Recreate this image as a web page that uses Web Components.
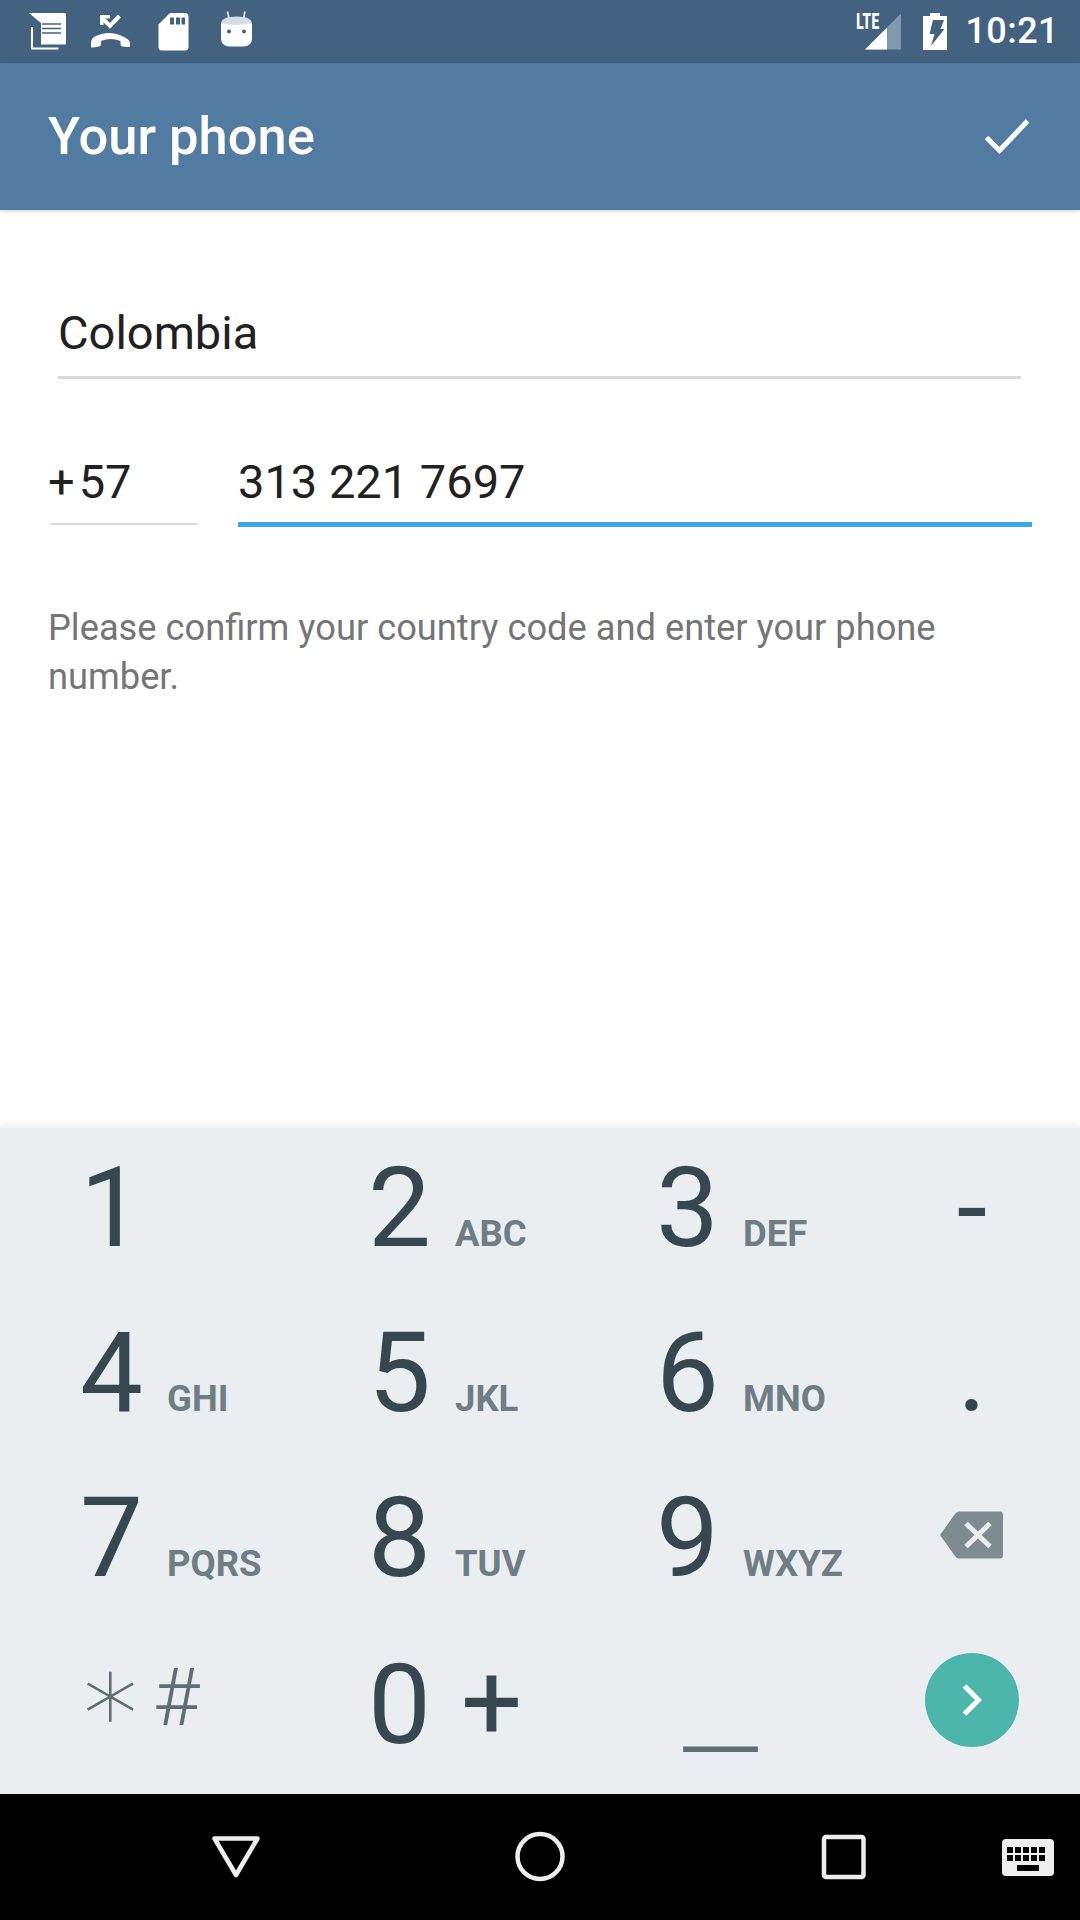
<!DOCTYPE html>
<html><head><meta charset="utf-8"><style>
html,body{margin:0;padding:0;background:#fff}
body{width:1080px;height:1920px;overflow:hidden;font-family:Roboto,"Liberation Sans",sans-serif}
phone-app{display:flex}
</style></head><body>
<phone-app></phone-app>
<script>
function def(name, html, render){
  customElements.define(name, class extends HTMLElement{
    constructor(){super();this.attachShadow({mode:'open'});}
    connectedCallback(){this.shadowRoot.innerHTML = render ? render(this) : html;}
  });
}
def('status-bar',`<style>
:host{display:flex;height:63px;background:#436280;align-items:center;padding:0 21px 0 29px;box-sizing:border-box;color:#fff}
.l{display:flex;gap:0;align-items:flex-start;height:63px}
svg{display:block;flex:none}
.sp{flex:1}
.lte{font:700 22px/1 "Roboto Condensed","Liberation Sans Narrow",Roboto,sans-serif;transform:scaleX(.75);transform-origin:left top;width:24px;letter-spacing:0;margin-top:-20px}
.t{font:500 36px/1 Roboto,sans-serif;letter-spacing:.45px;margin-left:18px;margin-top:-2px}
</style>
<div class="l">
<svg width="230" height="63" viewBox="29 0 230 63">
 <path d="M29 13H64.500Q66 13 66 14.500V43Q66 44.500 64.500 44.500H41V23Z" fill="#fff"/>
 <path d="M42 24H61M42 28.500H61M42 33H61" stroke="#436280" stroke-width="1.500" fill="none"/>
 <path d="M32 27V48.500H58.500" stroke="#fff" stroke-width="2" fill="none"/>
 <path d="M119.500 16L110 26L102 18" stroke="#fff" stroke-width="4" fill="none"/>
 <path d="M100 15H110V18.500H103.500V25H100Z" fill="#fff"/>
 <path d="M91 47V42Q91 39 94 37Q109 29 124 37Q130 40 130 43V46Q130 47 128 47L122 46.500Q120.500 46 120.500 44V41Q110.500 37 101 41V44Q101 46 99 46.500L93 47.500Q91 47.500 91 47Z" fill="#fff"/>
 <path d="M170 13H185Q188.500 13 188.500 16.500V47Q188.500 50.500 185 50.500H162Q158.500 50.500 158.500 47V24.500Z" fill="#fff"/>
 <path d="M170 17.500h4v7h-4zM176 17.500h4v7h-4zM181.500 17.500h3.500v7h-3.500z" fill="#436280"/>
 <path d="M229 19L227.500 11.500M243.500 19L245 11.500" stroke="#d4dde4" stroke-width="1.800" fill="none"/>
 <path d="M221 24Q221 16.500 236.500 16.500Q252 16.500 252 24V25H221Z" fill="#d4dde4"/>
 <path d="M221 23Q236.500 27 252 23V38Q252 46.500 243 46.500H230Q221 46.500 221 38Z" fill="#fff"/>
 <circle cx="229" cy="31.500" r="2" fill="#436280"/><circle cx="244" cy="31.500" r="2" fill="#436280"/>
</svg></div>
<div class="sp"></div>
<span class="lte">LTE</span>
<svg width="36" height="37" viewBox="0 0 36 37" style="margin-left:-15px;margin-top:-1px"><path d="M0 36.500L36 .5V36.500Z" fill="#8199ae"/><path d="M0 36.500L22 14.500V36.500Z" fill="#fff"/></svg>
<svg width="24" height="37" viewBox="0 0 24 37" style="margin-left:22px;margin-top:-1px"><path d="M7 0H17V3H24V37H0V3H7Z" fill="#fff"/><path d="M10 7H21L17.500 16H21.500L8 33L11.500 21H6.500Z" fill="#436280"/></svg>
<span class="t"><slot></slot></span>`);
def('app-toolbar',`<style>
:host{display:flex;height:147px;align-items:center;justify-content:space-between;padding:0 50px 0 48px;box-sizing:border-box;color:#fff;position:relative;z-index:1;box-shadow:0 1px 4px rgba(0,0,0,.2);background:#527ba1}
.h{font:500 52.500px/1 Roboto,sans-serif}
svg{display:block}
</style><span class="h"><slot></slot></span>
<svg width="46" height="36" viewBox="0 0 46 36" style="margin-top:-1px"><path d="M2.500 19.500L15.500 32.500L43.500 3" fill="none" stroke="#fff" stroke-width="5"/></svg>`);
def('text-field',`<style>
:host{display:block;box-sizing:border-box;font:400 47px/1 Roboto,sans-serif;color:#212121}
.v{display:block;height:var(--vh,67px);white-space:pre}
.u{height:var(--uh,3px);background:var(--uc,#d9d9d9);margin-left:var(--ul,0)}
</style><span class="v"><slot></slot></span><div class="u"></div>`);
def('phone-form',`<style>
:host{display:flex;flex-direction:column;flex:1;min-height:0;background:#fff;box-sizing:border-box;padding:99px 48px 0}
.c{margin:0 11px 0 10px}
.r{display:flex;margin-top:79px;align-items:flex-start}
.code{width:149px;margin-right:41px}
.ph{flex:1}
.hint{margin:76px 0 0;font:400 36.25px/49px Roboto,sans-serif;color:#757575}
</style>
<text-field class="c">Colombia</text-field>
<div class="r">
<text-field class="code" style="--uh:2px;--ul:3px;--vh:65px"><span style="margin-right:4px">+</span>57</text-field>
<text-field class="ph" style="--uh:5px;--uc:#39a9e8;--vh:64px">313 221 7697</text-field>
</div>
<p class="hint">Please confirm your country code and enter your phone number.</p>`);
def('dial-key',null,(el)=>{
 const d=el.getAttribute('d'), l=el.getAttribute('l')||'';
 return `<style>
:host{display:flex;align-items:baseline;height:165px;box-sizing:border-box;line-height:1;color:#37474f;font-family:Roboto,sans-serif}
.d{font:400 112px/151px Roboto,sans-serif;width:87px;white-space:pre}
.l{font:700 36.500px/1 Roboto,sans-serif;color:#6f7d84}
</style><span class="d">${d}</span><span class="l">${l}</span>`;
});
def('dial-pad',`<style>
:host{display:grid;grid-template-columns:288px 288px 288px 1fr;grid-auto-rows:165px;height:669px;box-sizing:border-box;padding:4px 0 0 80px;background:#ebeef1;border-top:3px solid #f5f6f7;position:relative;box-shadow:0 -2px 5px rgba(0,0,0,.06);color:#37474f}
.sym{text-align:center;width:62px;margin-left:-3px;font:400 110px/151px Roboto,sans-serif}
.bk{padding:49px 0 0;margin-left:-4px}
.fab{padding:26px 0 0;margin-left:-19px}
svg{display:block}
.star{display:flex;align-items:baseline;color:#5f6e75;margin-left:-2px}
.star .a{font:300 110px/120px "DejaVu Sans",sans-serif;letter-spacing:-20px;width:77px;margin-left:-2px;position:relative;top:6px}
.star .b{font:300 80px/141px Roboto,sans-serif}
.zero{font:400 112px/151px Roboto,sans-serif}
.zero .pl{font:400 108px/151px Roboto,sans-serif;margin-left:30px;vertical-align:4px}
.us{font:300 112px/161px Roboto,sans-serif;color:#5f6e75;padding-left:27px}
.us span{display:inline-block;transform:scaleX(1.55);transform-origin:left center}
</style>
<dial-key d="1"></dial-key><dial-key d="2" l="ABC"></dial-key><dial-key d="3" l="DEF"></dial-key>
<div class="sym">-</div>
<dial-key d="4" l="GHI"></dial-key><dial-key d="5" l="JKL"></dial-key><dial-key d="6" l="MNO"></dial-key>
<div class="sym">.</div>
<dial-key d="7" l="PQRS"></dial-key><dial-key d="8" l="TUV"></dial-key><dial-key d="9" l="WXYZ"></dial-key>
<div class="bk"><svg width="64" height="48" viewBox="0 0 64 48"><path d="M0 24L15 3Q16.500 .5 19 .5H60Q63 .5 63 3.500V44Q63 47.500 60 47.500H19Q16.500 47.500 15 45Z" fill="#7e8b90"/><path d="M26 12.500L50 35.500M50 12.500L26 35.500" stroke="#ebeef1" stroke-width="5" fill="none"/></svg></div>
<div class="star"><span class="a">∗</span><span class="b">#</span></div>
<div class="zero"><span>0</span><span class="pl">+</span></div>
<div class="us"><span>_</span></div>
<div class="fab"><svg width="94" height="94" viewBox="0 0 94 94"><circle cx="47" cy="47" r="47" fill="#4db6ac"/><path d="M39.500 33L53.500 47L39.500 61" stroke="#fff" stroke-width="5" fill="none"/></svg></div>`);
def('nav-bar',`<style>
:host{display:block;height:126px;background:#000;position:relative}
svg{display:block;position:absolute;left:0;top:0}
</style>
<svg width="1080" height="126" viewBox="0 1794 1080 126">
<path d="M214.500 1838.500H257.500L236 1875Z" fill="none" stroke="#eee" stroke-width="4.500" stroke-linejoin="round"/>
<circle cx="540" cy="1856.500" r="22.500" fill="none" stroke="#eee" stroke-width="4.500"/>
<rect x="824" y="1837" width="39.500" height="40" rx="2" fill="none" stroke="#eee" stroke-width="4.500"/>
<rect x="1002" y="1839" width="52" height="37" rx="4" fill="#eee"/>
<g fill="#000"><rect x="1007" y="1847" width="6" height="6"/><rect x="1015" y="1847" width="6" height="6"/><rect x="1023" y="1847" width="6" height="6"/><rect x="1031" y="1847" width="6" height="6"/><rect x="1039" y="1847" width="6" height="6"/><rect x="1007" y="1855" width="6" height="6"/><rect x="1015" y="1855" width="6" height="6"/><rect x="1023" y="1855" width="6" height="6"/><rect x="1031" y="1855" width="6" height="6"/><rect x="1039" y="1855" width="6" height="6"/><rect x="1017" y="1865" width="22" height="6"/></g>
</svg>`);
def('phone-app',`<style>
:host{display:flex;flex-direction:column;width:1080px;height:1920px}
</style>
<status-bar>10:21</status-bar>
<app-toolbar>Your phone</app-toolbar>
<phone-form></phone-form>
<dial-pad></dial-pad>
<nav-bar></nav-bar>`);
</script></body></html>
